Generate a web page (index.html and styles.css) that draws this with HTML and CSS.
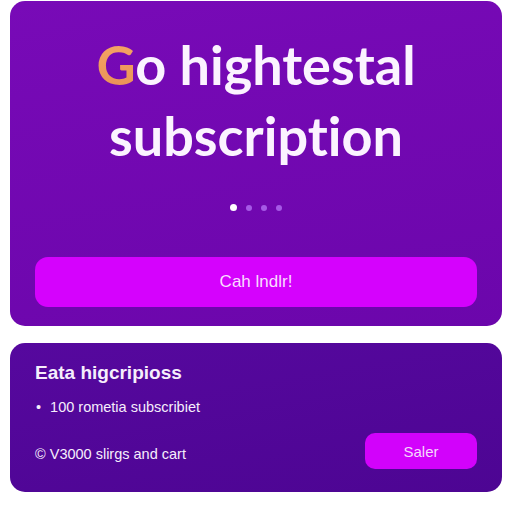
FILE: index.html
```html
<!DOCTYPE html>
<html lang="en">
<head>
    <meta charset="UTF-8">
    <meta name="viewport" content="width=device-width, initial-scale=1.0">
    <title>Subscription</title>
    <link rel="stylesheet" href="styles.css">
</head>
<body>
    <section class="hero">
        <h1 class="hero-title"><span class="hero-g">G</span>o hightestal<br>subscription</h1>
        <div class="dots">
            <span class="dot active"></span>
            <span class="dot"></span>
            <span class="dot"></span>
            <span class="dot"></span>
        </div>
        <button class="cta">Cah lndlr!</button>
    </section>
    <section class="plan">
        <h2 class="plan-title">Eata higcripioss</h2>
        <ul class="plan-list">
            <li>100 rometia subscribiet</li>
        </ul>
        <div class="plan-foot">
            <span class="plan-price">&copy; V3000 slirgs and cart</span>
            <button class="plan-btn">Saler</button>
        </div>
    </section>
</body>
</html>
```

FILE: styles.css
```css
body {
    margin: 0;
    padding: 1px 10px 0;
    background: #ffffff;
    font-family: "Liberation Sans", Arial, sans-serif;
}
.hero {
    height: 325px;
    box-sizing: border-box;
    padding: 28px 25px 19px;
    border-radius: 15px;
    background: linear-gradient(170deg, #780ab7 0%, #6b06ab 100%);
    display: flex;
    flex-direction: column;
    align-items: center;
}
.hero-title {
    margin: 0;
    font-family: Lato, sans-serif;
    font-weight: 700;
    font-size: 54px;
    line-height: 71px;
    color: #fbf3ff;
    text-align: center;
    font-variant-ligatures: none;
}
.hero-g {
    background: linear-gradient(180deg, #f7a867, #e88f55);
    -webkit-background-clip: text;
    background-clip: text;
    color: transparent;
}
.dots {
    display: flex;
    align-items: center;
    gap: 9px;
    margin-top: 33px;
}
.dot {
    width: 6px;
    height: 6px;
    border-radius: 50%;
    background: #a55ae6;
}
.dot.active {
    width: 7px;
    height: 7px;
    background: #ffffff;
}
.cta {
    margin-top: auto;
    width: 100%;
    height: 50px;
    border: none;
    border-radius: 13px;
    background: #d502fd;
    color: #f9dcff;
    font-family: "Liberation Sans", Arial, sans-serif;
    font-size: 17px;
}
.plan {
    margin-top: 17px;
    height: 149px;
    box-sizing: border-box;
    padding: 18px 25px 23px;
    border-radius: 15px;
    background: linear-gradient(170deg, #56089e 0%, #4d0593 100%);
    color: #f6eefc;
    display: flex;
    flex-direction: column;
}
.plan-title {
    margin: 0;
    font-size: 19px;
    font-weight: 700;
    line-height: 24px;
}
.plan-list {
    margin: 14px 0 0;
    padding: 0;
    list-style: none;
    font-size: 14.5px;
}
.plan-list li::before {
    content: "\2022";
    margin: 0 9px 0 1px;
}
.plan-foot {
    margin-top: auto;
    display: flex;
    align-items: center;
    justify-content: space-between;
}
.plan-price {
    margin-top: 6px;
    font-size: 14.5px;
}
.plan-btn {
    width: 112px;
    height: 36px;
    border: none;
    border-radius: 10px;
    background: #d202fb;
    color: #f4d8fc;
    font-family: "Liberation Sans", Arial, sans-serif;
    font-size: 15px;
}
```
